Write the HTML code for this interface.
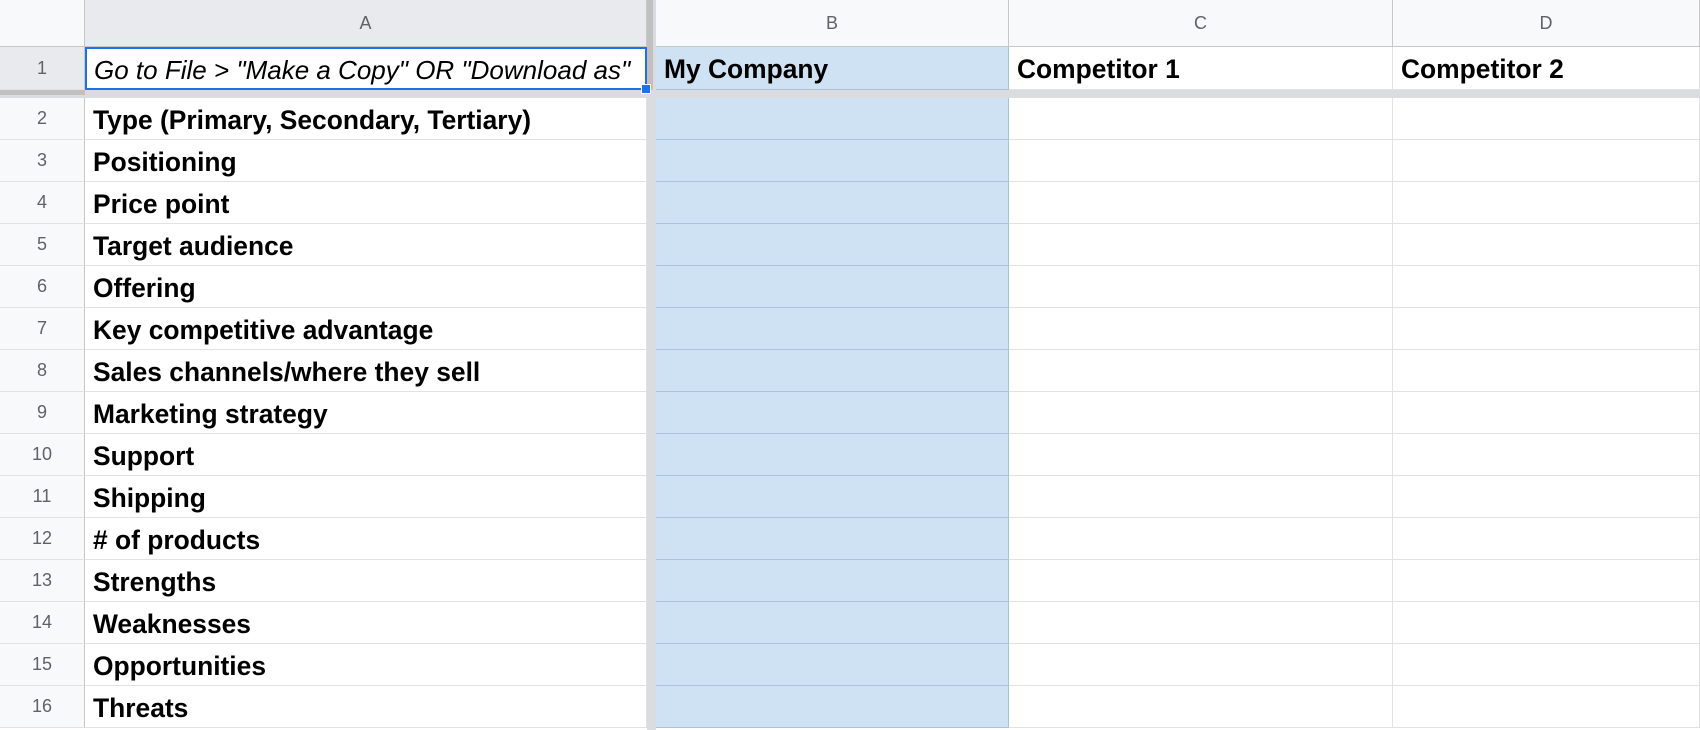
<!DOCTYPE html><html><head><style>
body{margin:0;width:1700px;height:730px;overflow:hidden;background:#fff;font-family:"Liberation Sans",Arial,sans-serif;position:relative}
.a{position:absolute;box-sizing:border-box}
.h{background:#f8f9fa;color:#5f6368;font-size:18px;display:flex;align-items:center;justify-content:center;border-right:1px solid #c7c7c7;border-bottom:1px solid #c7c7c7}
.r{background:#f8f9fa;color:#5f6368;font-size:18px;display:flex;align-items:center;justify-content:center;border-bottom:1px solid #e2e2e3;border-right:1px solid #c7c7c7}
.c{border-right:1px solid #e2e2e3;border-bottom:1px solid #e2e2e3;font-weight:bold;font-size:26.4px;padding-left:8px;padding-top:3px;display:flex;align-items:center;color:#000;white-space:nowrap;overflow:hidden}
</style></head><body>
<div class="a h" style="left:0;top:0;width:85px;height:47px"></div>
<div class="a h" style="left:85px;top:0;width:562px;height:47px;background:#e8eaed">A</div>
<div class="a" style="left:647px;top:0;width:9px;height:730px;background:#dadce0"></div>
<div class="a" style="left:647px;top:0;width:6px;height:98px;background:#c0c0c0"></div>
<div class="a h" style="left:656px;top:0;width:353px;height:47px">B</div>
<div class="a h" style="left:1009px;top:0;width:384px;height:47px">C</div>
<div class="a h" style="left:1393px;top:0;width:307px;height:47px">D</div>
<div class="a r" style="left:0;top:47px;width:85px;height:43px;background:#e8eaed">1</div>
<div class="a" style="left:0;top:90px;width:1700px;height:8px;background:#dadce0"></div>
<div class="a" style="left:0;top:90px;width:85px;height:5px;background:#c0c0c0"></div>
<div class="a c" style="left:85px;top:47px;width:562px;height:43px;font-weight:normal;font-style:italic;border:2px solid #1a73e8;padding-left:7px;font-size:26px">Go to File &gt; "Make a Copy" OR "Download as"</div>
<div class="a" style="left:641px;top:84px;width:10px;height:10px;background:#1a73e8;border:1px solid #fff"></div>
<div class="a c" style="left:656px;top:47px;width:353px;height:43px;background:#cfe2f3;border-bottom-color:#a9c3d9;border-right-color:#a9c3d9">My Company</div>
<div class="a c" style="left:1009px;top:47px;width:384px;height:43px">Competitor 1</div>
<div class="a c" style="left:1393px;top:47px;width:307px;height:43px">Competitor 2</div>
<div id="g"></div>
<script>
var L=["Type (Primary, Secondary, Tertiary)","Positioning","Price point","Target audience","Offering","Key competitive advantage","Sales channels/where they sell","Marketing strategy","Support","Shipping","# of products","Strengths","Weaknesses","Opportunities","Threats"];
var h="";for(var i=0;i<L.length;i++){var t=98+i*42;
h+='<div class="a r" style="left:0;top:'+t+'px;width:85px;height:42px">'+(i+2)+'</div>';
h+='<div class="a c" style="left:85px;top:'+t+'px;width:562px;height:42px">'+L[i].replace("&","&amp;")+'</div>';
h+='<div class="a c" style="left:656px;top:'+t+'px;width:353px;height:42px;background:#cfe2f3;border-bottom-color:#a9c3d9;border-right-color:#a9c3d9"></div>';
h+='<div class="a c" style="left:1009px;top:'+t+'px;width:384px;height:42px"></div>';
h+='<div class="a c" style="left:1393px;top:'+t+'px;width:307px;height:42px"></div>';}
document.getElementById("g").innerHTML=h;
</script>
</body></html>
